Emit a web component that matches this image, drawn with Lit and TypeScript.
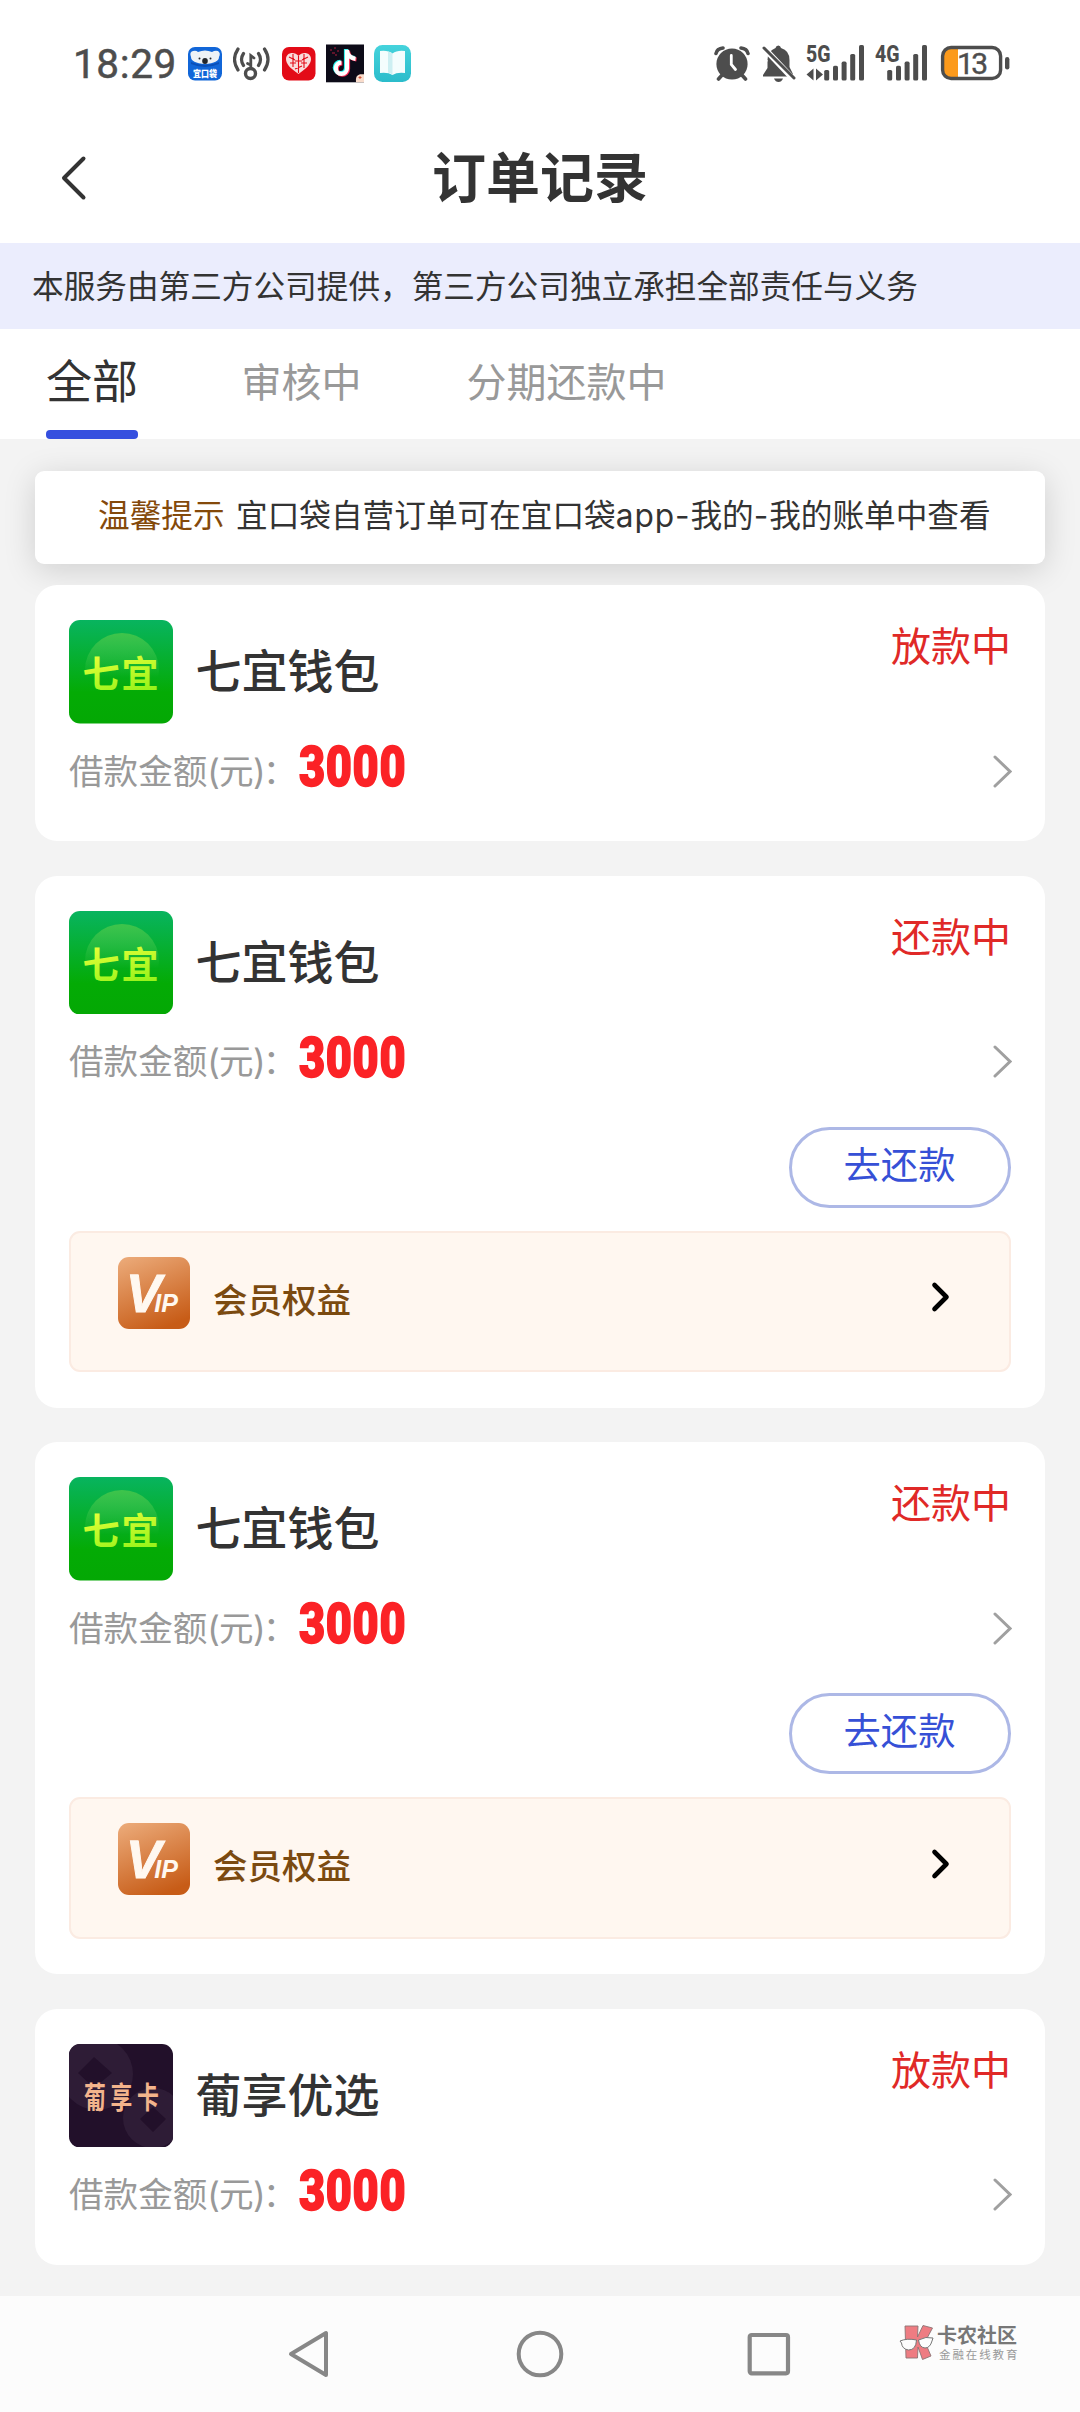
import { LitElement, html, css, svg, nothing } from "lit";
import { customElement, property } from "lit/decorators.js";

interface Order {
  brand: "qiyi" | "pu";
  name: string;
  status: string;
  amount: string;
  repay: boolean;
}

const ORDERS: Order[] = [
  { brand: "qiyi", name: "七宜钱包", status: "放款中", amount: "3000", repay: false },
  { brand: "qiyi", name: "七宜钱包", status: "还款中", amount: "3000", repay: true },
  { brand: "qiyi", name: "七宜钱包", status: "还款中", amount: "3000", repay: true },
  { brand: "pu", name: "葡享优选", status: "放款中", amount: "3000", repay: false },
];

const bars = (x: number) => svg`
  <g fill="#4d4d4d">
    <rect x=${x} y="36" width="5" height="10.5" rx="1.6"/>
    <rect x=${x + 8.8} y="31.7" width="5" height="14.8" rx="1.6"/>
    <rect x=${x + 17.4} y="27.6" width="5" height="18.9" rx="1.6"/>
    <rect x=${x + 26} y="20" width="5" height="26.5" rx="1.6"/>
    <rect x=${x + 34.8} y="11" width="5" height="35.5" rx="1.6"/>
  </g>`;

@customElement("status-bar")
class StatusBar extends LitElement {
  static styles = css`
    :host { display: block; }
    .bar {
      box-sizing: border-box; height: 113px; padding: 15px 70px 0 73px;
      display: flex; align-items: center; justify-content: space-between;
    }
    .group { display: flex; align-items: center; gap: 10px; }
    .time {
      width: 105px; font: 400 40.5px/40px Roboto, sans-serif; letter-spacing: 0.6px;
      color: #4d4d4d; white-space: nowrap; -webkit-text-stroke: 0.5px #4d4d4d;
    }
    svg { display: block; }
  `;
  render() {
    return html`<div class="bar">
      <div class="group">
        <span class="time">18:29</span>
        <svg width="35" height="40" viewBox="0 0 35 40">
          <rect x="0" y="3" width="34" height="33.5" rx="7" fill="#1166d8"/>
          <path d="M3 13 Q1 8 5 7 Q8 6 10 8 Q17 5 24 8 Q27 6 30 7 Q33 9 31 13 Q31 19 17 20 Q3 19 3 13Z" fill="#eef2f6"/>
          <path d="M3 18 Q17 24 31 18 L31 20 Q17 26 3 20Z" fill="#0a4fb8"/>
          <ellipse cx="17" cy="17" rx="2.800" ry="3" fill="#23262b"/>
          <circle cx="11.500" cy="14.500" r="1" fill="#23262b"/><circle cx="22.500" cy="14.500" r="1" fill="#23262b"/>
          <text x="5" y="32.5" font-family="Noto Sans CJK SC" font-size="9.4" font-weight="900" fill="#fff" textLength="24" lengthAdjust="spacingAndGlyphs">宜口袋</text>
        </svg>
        <svg width="38" height="40" viewBox="0 0 38 40" fill="none" stroke="#4d4d4d" stroke-linecap="round">
          <circle cx="17.500" cy="29.500" r="5" stroke-width="3.400"/>
          <path d="M17.800 24 V11.500 L21 14 M17.800 21 L14.500 19.500" stroke-width="2.800"/>
          <path d="M10.500 9.500 Q6.500 15.500 10.500 21.500 M5 5 Q-2 15.500 5 26 M25.500 9.500 Q29.500 15.500 25.500 21.500 M31.500 5 Q38.500 15.500 31.500 26" stroke-width="3.200"/>
        </svg>
        <svg width="35" height="40" viewBox="0 0 35 40">
          <rect x="1" y="3" width="33.500" height="33.500" rx="7" fill="#e30b17"/>
          <path d="M17.500 30 C9 24 5 20 5 15 C5 8 14 7 17.500 12 C21 7 30 8 30 15 C30 20 26 24 17.500 30Z" fill="#f9dcdb"/>
          <path d="M8 13 L14 16 M9 19 L15 19 M12 10 L12 23 M17.500 12 V29 M14 17 H21 M27 13 L21 16 M26 19 L20 19 M23 10 V24 M14 25 L21 22" stroke="#e30b17" stroke-width="1.100" fill="none"/>
        </svg>
        <svg width="38" height="40" viewBox="0 0 38 40">
          <rect x="0" y="0.500" width="38" height="37.800" fill="#0d0b18"/>
          <path d="M4 6 h2 M8 4 h2 M6 9 h3 M11 7 h2 M9 11 h2" stroke="#7c1830" stroke-width="1.500"/>
          <g fill="none" stroke-width="4.200">
            <path d="M20 5 V23.500 a5.600 5.600 0 1 1 -5.600 -5.600 M20 6 Q21 13 28.500 14" stroke="#25f4ee"/>
            <path d="M22 6.500 V25 a5.600 5.600 0 1 1 -5.600 -5.600 M22 7.500 Q23 14.500 30.500 15.500" stroke="#fe2c55"/>
            <path d="M21 5.800 V24.200 a5.600 5.600 0 1 1 -5.600 -5.600 M21 6.800 Q22 13.800 29.500 14.800" stroke="#fff"/>
          </g>
          <path d="M38 38.300 h-8 q-1 -7 4 -8 l4 0z" fill="#f9dccb"/>
          <path d="M32.500 33.500 h3 M34 32 v3" stroke="#d2553d" stroke-width="1"/>
        </svg>
        <svg width="38" height="40" viewBox="0 0 38 40">
          <defs><linearGradient id="bk" x1="0" y1="0" x2="0" y2="1"><stop offset="0" stop-color="#45d3dc"/><stop offset="1" stop-color="#2bbccb"/></linearGradient></defs>
          <rect x="0" y="1" width="37" height="37" rx="8.500" fill="url(#bk)"/>
          <path d="M18.500 9.500 Q14 6 6 7 V29 Q14 28 18.500 31 Q23 28 31 29 V7 Q23 6 18.500 9.500Z" fill="#f4fdfd"/>
          <path d="M18.500 9.500 V31 Q16 29 14 28.600 V7.500 Q17 8 18.500 9.500Z" fill="#cdeff2"/>
        </svg>
      </div>
      <div class="group">
        <svg width="36" height="40" viewBox="0 0 36 40">
          <g fill="none" stroke="#4d4d4d" stroke-width="3.600" stroke-linecap="round">
            <path d="M2 9.500 Q3 4.500 9 4 M34 9.500 Q33 4.500 27 4 M9 30 L4.500 35 M27 30 L31.500 35"/>
          </g>
          <circle cx="18" cy="20" r="15.600" fill="#4d4d4d"/>
          <path d="M17.300 11.500 V20.500 L21.500 25.500" fill="none" stroke="#fff" stroke-width="2.800" stroke-linecap="round"/>
        </svg>
        <svg width="36" height="40" viewBox="0 0 36 40">
          <path d="M18.300 1.500 Q20.500 1.500 21 4 Q29.500 6.500 29.500 16 V23 L33 30 V32.500 H3 V31 L7.500 24 V16 Q7.500 7 15.500 4 Q16 1.500 18.300 1.500Z" fill="#4d4d4d"/>
          <path d="M14 34.500 H23 Q21.500 38 18.500 38 Q15.500 38 14 34.500Z" fill="#4d4d4d"/>
          <path d="M0 4 H8 L38 36 L32 38 Z" fill="#fff"/>
          <path d="M4 4 L34 34" stroke="#4d4d4d" stroke-width="3" stroke-linecap="round"/>
          <path d="M0 8 V22 L8 17Z" fill="#fff"/>
        </svg>
        <svg width="59" height="60" viewBox="0 0 59 60">
          <text x="0" y="28" font-family="Roboto" font-weight="800" font-size="23" fill="#4d4d4d" textLength="24.500" lengthAdjust="spacingAndGlyphs">5G</text>
          <path d="M7.500 34.500 V46.500 L0.500 40.500Z M10 34.500 V46.500 L17 40.500Z" fill="#4d4d4d"/>
          ${bars(18.2)}
        </svg>
        <svg width="55" height="60" viewBox="0 0 55 60">
          <text x="0" y="28" font-family="Roboto" font-weight="800" font-size="23" fill="#4d4d4d" textLength="24.500" lengthAdjust="spacingAndGlyphs">4G</text>
          ${bars(12.2)}
        </svg>
        <svg width="70" height="40" viewBox="0 0 70 40">
          <path d="M4 11 Q4 5 9 5 H18 V33 H9 Q4 33 4 28Z" fill="#fc9a1c"/>
          <rect x="2.600" y="3.500" width="58" height="31" rx="8.500" fill="none" stroke="#4d4d4d" stroke-width="3.400"/>
          <text x="17" y="29.500" font-family="Roboto" font-size="30" fill="#4d4d4d" stroke="#4d4d4d" stroke-width="0.400" textLength="31">13</text>
          <rect x="65" y="13" width="4.400" height="12.500" rx="2.200" fill="#4d4d4d"/>
        </svg>
      </div>
    </div>`;
  }
}

@customElement("order-card")
class OrderCard extends LitElement {
  @property({ attribute: false }) order!: Order;

  static styles = css`
    :host { display: block; font-family: Inter, "Noto Sans CJK SC", sans-serif; }
    svg { display: block; flex: none; }
    .card {
      box-sizing: border-box; background: #fff; border-radius: 22px;
      padding: 35px 34.500px 0 34px; height: 256.300px;
    }
    .card.tall { height: 532px; }
    .head { display: flex; align-items: flex-start; }
    .name {
      margin-left: 22.500px; height: 103.500px; line-height: 103.500px; flex: 1;
      font-size: 46px; font-weight: 500; color: #333;
    }
    .status { margin-right: -0.500px; font-size: 40px; line-height: 54px; color: #e02927; }
    .row { display: flex; align-items: center; height: 60px; margin-top: 17px; }
    .label { font-size: 34.600px; line-height: 60px; color: #999; width: 230px; white-space: nowrap; }
    .paren { letter-spacing: -0.800px; }
    .colon { margin-left: -2px; }
    .amount {
      flex: 1; font: 900 55px/60px Roboto, sans-serif; color: #fb2226;
      -webkit-text-stroke: 1.600px #fb2226; letter-spacing: 0.800px;
      margin-top: -7.500px;
      transform: scaleX(0.82); transform-origin: 0 50%;
    }
    .chev { margin-right: -1.500px; }
    .actions { display: flex; justify-content: flex-end; margin-top: 35.500px; }
    .repay {
      box-sizing: border-box; width: 222px; height: 81px; border: 3px solid #adb8e6;
      border-radius: 41px; font-size: 37.300px; line-height: 72px; text-align: center; color: #3650d6;
    }
    .vip {
      box-sizing: border-box; margin-top: 23px; height: 141.500px; border: 2px solid #fbebe2;
      border-radius: 11px; background: #fff7f0; padding: 24px 58px 0 47px;
      display: flex; align-items: flex-start;
    }
    .benefit { flex: 1; margin-left: 23px; font-size: 34.500px; font-weight: 500; line-height: 88px; color: #7b4a10; }
    .go { margin-top: 24.500px; }
  `;

  private logo() {
    return this.order.brand === "qiyi"
      ? html`<svg width="104" height="103.500" viewBox="0 0 104 103.500">
          <defs>
            <linearGradient id="g" x1="0" y1="0" x2="0" y2="1"><stop offset="0" stop-color="#08b45f"/><stop offset="0.700" stop-color="#04ab05"/><stop offset="1" stop-color="#04a804"/></linearGradient>
            <linearGradient id="c" x1="0" y1="0" x2="0" y2="1"><stop offset="0" stop-color="#3fc44b"/><stop offset="0.600" stop-color="#3fc44b" stop-opacity="0"/></linearGradient>
            <linearGradient id="t" x1="0" y1="0" x2="0.300" y2="1"><stop offset="0.200" stop-color="#eaff3a"/><stop offset="1" stop-color="#98f41a"/></linearGradient>
          </defs>
          <rect width="104" height="103.500" rx="11" fill="url(#g)"/>
          <circle cx="53" cy="50" r="37" fill="url(#c)"/>
          <text x="13.500" y="67.500" font-family="Noto Sans CJK SC" font-size="37" font-weight="700" fill="url(#t)" textLength="76">七宜</text>
        </svg>`
      : html`<svg width="104" height="103.500" viewBox="0 0 104 103.500">
          <defs><clipPath id="k"><rect width="104" height="103.500" rx="11"/></clipPath></defs>
          <g clip-path="url(#k)">
            <rect width="104" height="103.500" fill="#22102a"/>
            <circle cx="28" cy="30" r="36" fill="#2e1c36"/>
            <circle cx="84" cy="74" r="30" fill="#2e1c36"/>
            <path d="M25 13 L43 29 L25 44 L9 29Z M84 63 L97 75 L84 88 L71 75Z" fill="#22102a"/>
          </g>
          <text x="0" y="0" transform="translate(15 63.500) scale(0.840 1.150)" font-family="Noto Sans CJK SC" font-size="26" font-weight="700" fill="#f3b48c" textLength="89">葡享卡</text>
        </svg>`;
  }

  render() {
    const o = this.order;
    return html`<section class="card ${o.repay ? "tall" : ""}">
      <div class="head">
        ${this.logo()}
        <div class="name">${o.name}</div>
        <div class="status">${o.status}</div>
      </div>
      <div class="row">
        <span class="label">借款金额<span class="paren">(元)</span><span class="colon">：</span></span>
        <span class="amount">${o.amount}</span>
        <svg class="chev" width="20" height="34" viewBox="0 0 20 34" fill="none"><path d="M3 3 L18 17.500 L3 32" stroke="#a0a0a0" stroke-width="3" stroke-linecap="round"/></svg>
      </div>
      ${o.repay
        ? html`<div class="actions"><div class="repay">去还款</div></div>
            <div class="vip">
              <svg width="72" height="72" viewBox="0 0 72 72">
                <defs><linearGradient id="v" x1="0.200" y1="0" x2="0.600" y2="1"><stop offset="0" stop-color="#eaa775"/><stop offset="1" stop-color="#c75c17"/></linearGradient></defs>
                <rect width="72" height="72" rx="11" fill="url(#v)"/>
                <path d="M12 17.500 H20 V21 H13Z" fill="#fff8f0"/>
                <text x="8" y="55" font-family="Liberation Sans" font-weight="700" font-style="italic" fill="#fff8f0" stroke="#fff8f0"><tspan font-size="53" stroke-width="1">V</tspan><tspan font-size="25" stroke-width="0" dx="-7">IP</tspan></text>
              </svg>
              <div class="benefit">会员权益</div>
              <svg class="go" width="20" height="32" viewBox="0 0 20 32" fill="none"><path d="M3.500 4 L15.500 16 L3.500 28" stroke="#000" stroke-width="4.600" stroke-linecap="round" stroke-linejoin="round"/></svg>
            </div>`
        : nothing}
    </section>`;
  }
}

@customElement("app-root")
class AppRoot extends LitElement {
  static styles = css`
    :host { display: block; font-family: Inter, "Noto Sans CJK SC", sans-serif; }
    svg { display: block; }
    .page {
      position: relative; width: 1080px; height: 2412px; overflow: hidden;
      background: #f3f3f3; display: flex; flex-direction: column; color: #333;
    }
    .top { background: #fff; }
    .header {
      display: grid; grid-template-columns: 160px 1fr 160px; align-items: center; height: 130px;
    }
    .back { margin-left: 59px; }
    .title { text-align: center; font-size: 54px; font-weight: 700; line-height: 71px; }
    .banner { height: 86px; line-height: 87px; padding-left: 32px; background: #ebedfd; font-size: 31.650px; }
    .tabs { display: flex; height: 110px; padding-left: 46px; color: #999; font-size: 40px; line-height: 108px; }
    .tab { margin-right: 105px; }
    .tab.active {
      color: #333; font-size: 46px; line-height: 104px; margin-right: 103.500px;
      display: flex; flex-direction: column;
    }
    .line { width: 92px; height: 9px; margin-top: -3px; border-radius: 4px; background: #354fdf; }
    .list { flex: 1; padding: 32px 35px 0; display: flex; flex-direction: column; }
    .notice {
      height: 93px; line-height: 90px; padding-left: 63px; border-radius: 9px; background: #fff;
      font-size: 31.650px; box-shadow: 0 6px 32px rgba(0, 0, 0, 0.15); white-space: nowrap;
    }
    .tip { color: #84490a; margin-right: 11.500px; }
    .latin { letter-spacing: 0.900px; }
    .cards { position: relative; margin-top: 21px; display: flex; flex-direction: column; gap: 34.500px; }
    .nav { height: 116px; background: #fcfcfc; display: flex; align-items: center; justify-content: center; gap: 180px; }
    .mark { position: absolute; left: 899px; top: 2322px; display: flex; gap: 2px; }
    .words { display: flex; flex-direction: column; color: #777; }
    .big { font-size: 20px; line-height: 28px; font-weight: 700; }
    .small { font-size: 11.500px; line-height: 10px; letter-spacing: 1.900px; margin-left: 2px; color: #999; }
  `;
  render() {
    return html`<div class="page">
      <div class="top">
        <status-bar></status-bar>
        <div class="header">
          <svg class="back" width="30" height="48" viewBox="0 0 30 48" fill="none"><path d="M24.500 4.500 L5 24 L24.500 43.500" stroke="#333" stroke-width="4" stroke-linecap="round" stroke-linejoin="round"/></svg>
          <div class="title">订单记录</div>
        </div>
        <div class="banner">本服务由第三方公司提供，第三方公司独立承担全部责任与义务</div>
        <div class="tabs">
          <div class="tab active">全部<div class="line"></div></div>
          <div class="tab">审核中</div>
          <div class="tab">分期还款中</div>
        </div>
      </div>
      <div class="list">
        <div class="notice"><span class="tip">温馨提示</span>宜口袋自营订单可在宜口袋<span class="latin">app-</span>我的<span class="latin">-</span>我的账单中查看</div>
        <div class="cards">${ORDERS.map((o) => html`<order-card .order=${o}></order-card>`)}</div>
      </div>
      <div class="nav">
        <svg width="48" height="50" viewBox="0 0 48 50" fill="none"><path d="M4 25 L39 4 V46 Z" stroke="#878787" stroke-width="4" stroke-linejoin="round"/></svg>
        <svg width="50" height="50" viewBox="0 0 50 50" fill="none"><circle cx="25" cy="25" r="21.300" stroke="#878787" stroke-width="4"/></svg>
        <svg width="48" height="50" viewBox="0 0 48 50" fill="none"><rect x="4.700" y="6" width="38.300" height="38.300" rx="2" stroke="#878787" stroke-width="4.200"/></svg>
      </div>
      <div class="mark">
        <svg width="36" height="40" viewBox="0 0 36 40">
          <g fill="#ee7c82" stroke="#8b7474" stroke-width="0.900">
            <path d="M6 4 H19 L18.500 15 L24 3.500 L33.500 6 L26 20 L32 34 L23.500 37.500 L19 25 L18.500 36 H7Z"/>
          </g>
          <path d="M1 19 Q8 16 17.500 18 Q17 28 9.500 28 Q3 27 2.500 21Z M19.500 18 Q27 14 34 16 L33 19 Q31 26 26 26 Q20.500 25.500 19.500 18Z" fill="#fdfdfd" stroke="#777" stroke-width="1"/>
        </svg>
        <div class="words"><span class="big">卡农社区</span><span class="small">金融在线教育</span></div>
      </div>
    </div>`;
  }
}
